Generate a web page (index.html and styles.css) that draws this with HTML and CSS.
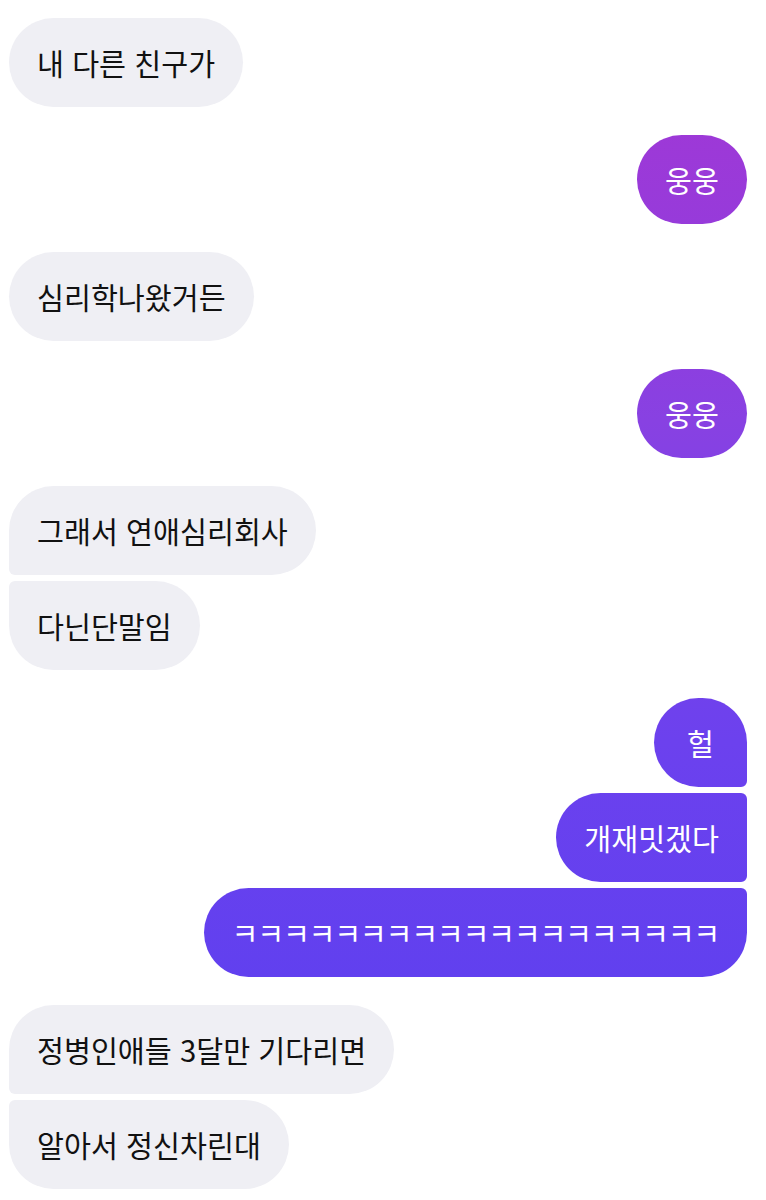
FILE: index.html
```html
<!DOCTYPE html>
<html lang="ko">
<head>
    <meta charset="UTF-8">
    <meta name="viewport" content="width=device-width, initial-scale=1.0">
    <title>Chat</title>
    <link rel="stylesheet" href="styles.css">
</head>
<body>

    <div class="chat">
        <div class="group them">
            <div class="bubble">내 다른 친구가</div>
        </div>

        <div class="group me">
            <div class="bubble">웅웅</div>
        </div>

        <div class="group them">
            <div class="bubble">심리학나왔거든</div>
        </div>

        <div class="group me">
            <div class="bubble">웅웅</div>
        </div>

        <div class="group them">
            <div class="bubble">그래서 연애심리회사</div>
            <div class="bubble">다닌단말임</div>
        </div>

        <div class="group me">
            <div class="bubble">헐</div>
            <div class="bubble">개재밋겠다</div>
            <div class="bubble laugh">ㅋㅋㅋㅋㅋㅋㅋㅋㅋㅋㅋㅋㅋㅋㅋㅋㅋㅋㅋ</div>
        </div>

        <div class="group them">
            <div class="bubble">정병인애들 3달만 기다리면</div>
            <div class="bubble">알아서 정신차린대</div>
        </div>
    </div>

</body>
</html>
```

FILE: styles.css
```css
body {
    margin: 0;
    background: #ffffff;
    font-family: "Noto Sans CJK KR", "Noto Sans", sans-serif;
}

.chat {
    display: flex;
    flex-direction: column;
    gap: 28px;
    padding: 18px 19px 0 9px;
}

.group {
    display: flex;
    flex-direction: column;
    gap: 6px;
}

.them {
    align-items: flex-start;
}

.me {
    align-items: flex-end;
}

.bubble {
    box-sizing: border-box;
    min-width: 93px;
    text-align: center;
    font-size: 29.3px;
    line-height: 41px;
    padding: 24px 28px;
    border-radius: 45px;
    white-space: nowrap;
}

.bubble.laugh {
    letter-spacing: -1.3px;
}

.them .bubble {
    background: #efeff4;
    color: #111111;
}

.me .bubble {
    color: #ffffff;
    /* gradient stays put while bubbles move, like the app */
    background: linear-gradient(to bottom, #a636d3 0, #953bdb 250px, #8841e2 420px, #6c41ee 740px, #6040ef 1000px, #5e40ef 1200px);
    background-attachment: fixed;
}

/* squared corners where bubbles in a group touch */
.them .bubble:not(:last-child) {
    border-bottom-left-radius: 6px;
}

.them .bubble:not(:first-child) {
    border-top-left-radius: 6px;
}

.me .bubble:not(:last-child) {
    border-bottom-right-radius: 6px;
}

.me .bubble:not(:first-child) {
    border-top-right-radius: 6px;
}
```
